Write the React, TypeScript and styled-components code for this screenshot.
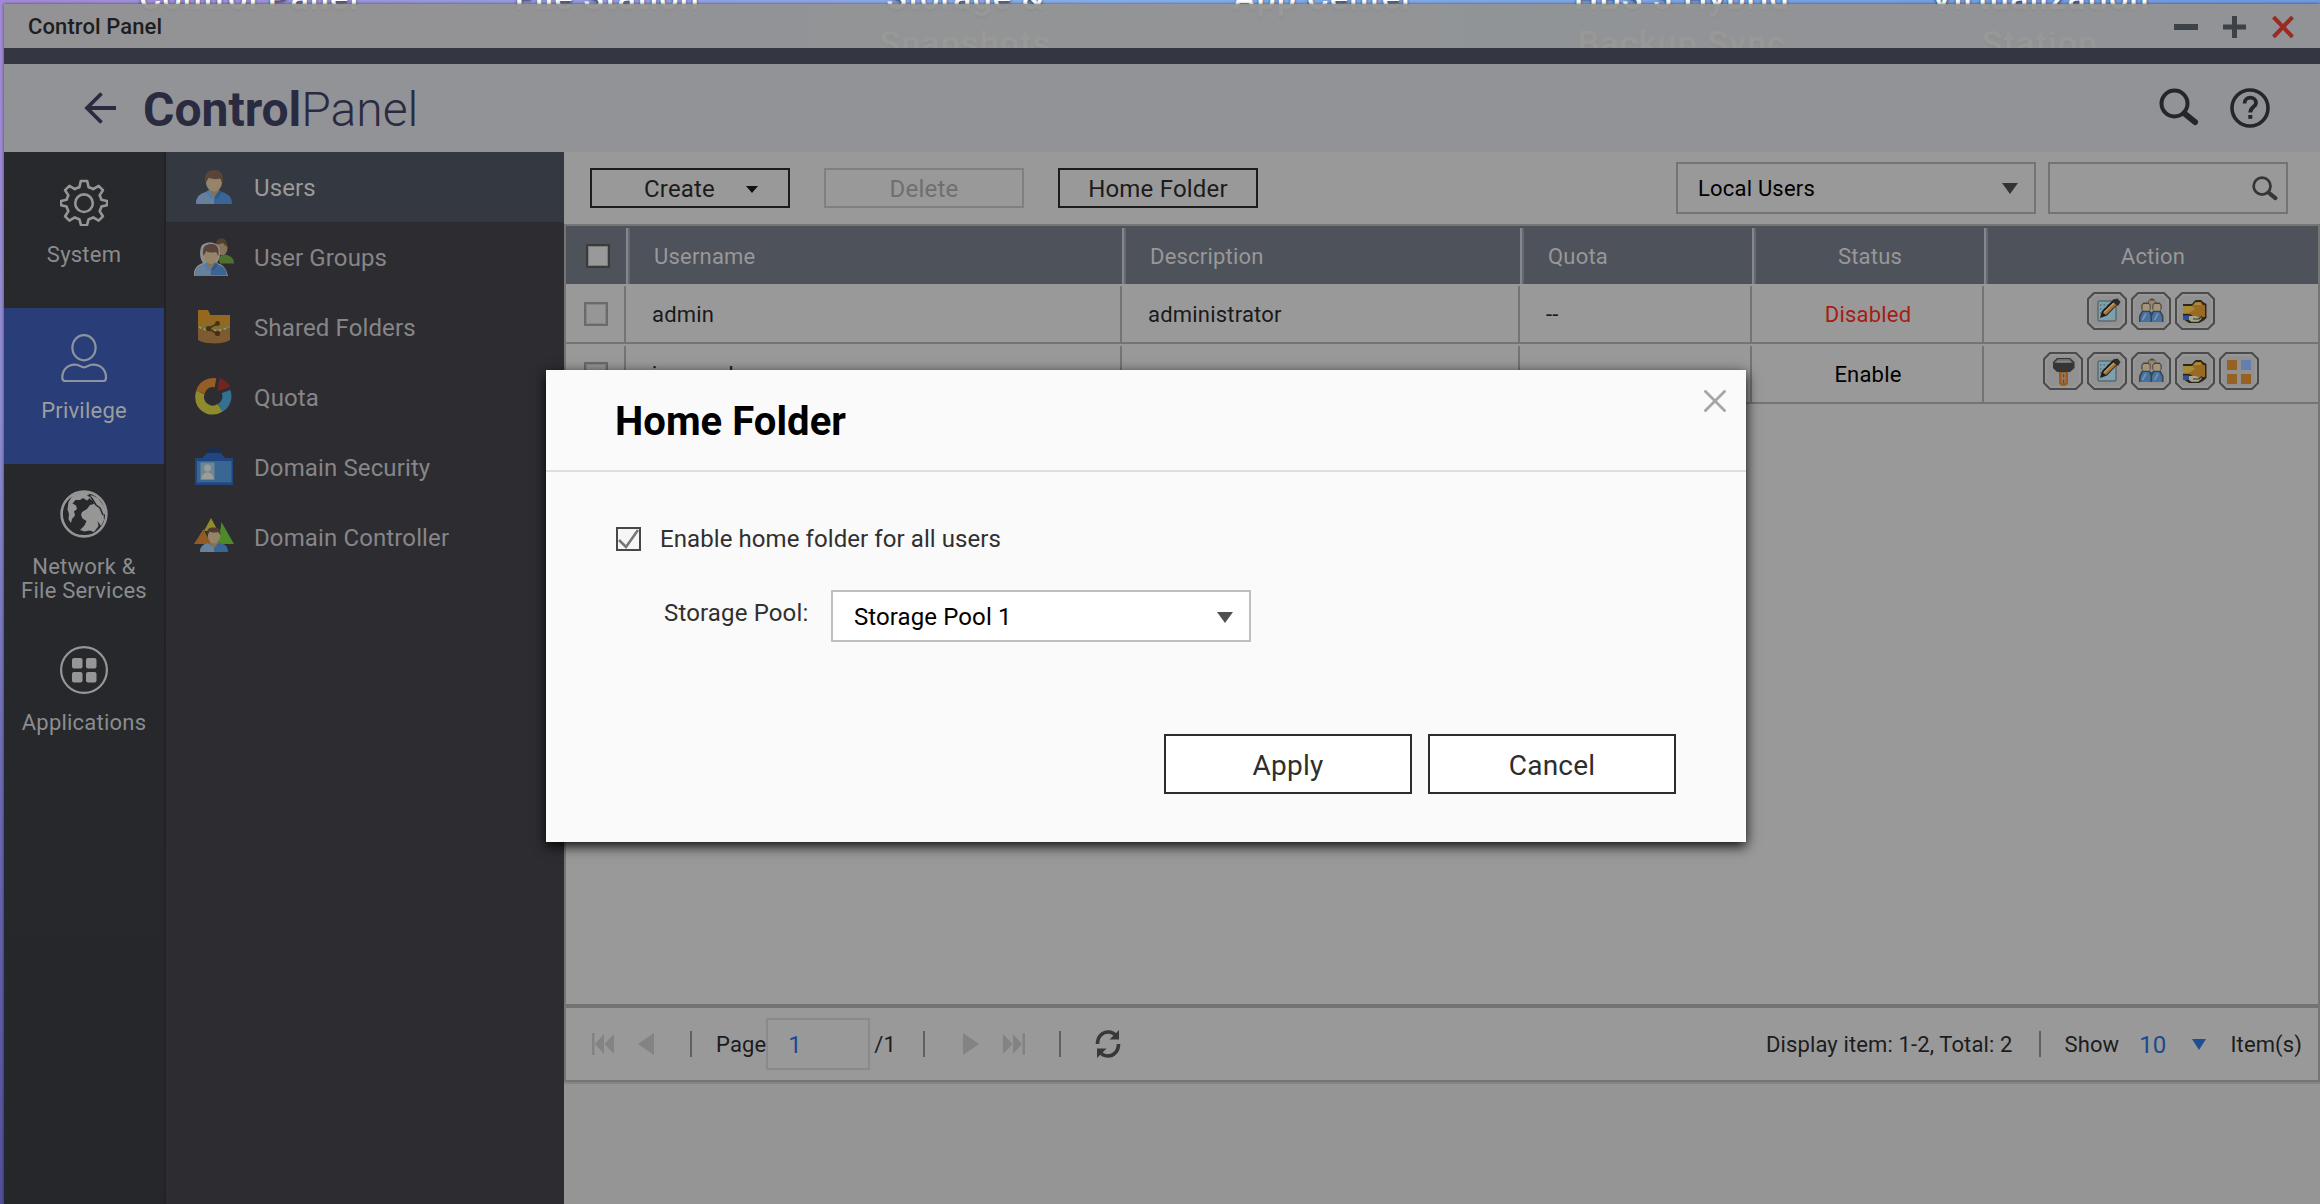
import React from "react";
import styled, { createGlobalStyle, css } from "styled-components";

const GlobalStyle = createGlobalStyle`
  * { box-sizing: border-box; }
  html, body { margin: 0; padding: 0; }
  body { overflow: hidden; font-family: Roboto, "Liberation Sans", sans-serif; }
  button, input { font-family: inherit; }
`;

/* ---------- desktop ---------- */

const Desktop = styled.div`
  position: relative;
  width: 2320px;
  height: 1204px;
  overflow: hidden;
  background:
    linear-gradient(90deg, transparent 4px, #86aeea 1100px, #7099de 2320px) 0 0 / 100% 60px no-repeat,
    linear-gradient(180deg, #a48ad6 0, #8d8ccf 420px, #6c68b4 800px, #54509c 1204px);
`;

const ShortcutRow = styled.div`
  display: flex;
  margin-top: -26px;
  padding-left: 70px;
`;

const Shortcut = styled.div`
  flex: 0 0 358.2px;
  display: flex;
  flex-direction: column;
  align-items: center;
  font-size: 34px;
  font-weight: 500;
  line-height: 46px;
  letter-spacing: 1.15px;
  color: #fff;
  white-space: nowrap;
  text-shadow: 0 2px 3px rgba(0, 0, 0, 0.6);
`;

/* ---------- window ---------- */

const Window = styled.div`
  position: absolute;
  left: 4px;
  top: 4px;
  width: 2316px;
  height: 1200px;
  display: flex;
  flex-direction: column;
  box-shadow: 0 0 3px rgba(0, 0, 0, 0.55);
`;

const TitleBar = styled.div`
  flex: 0 0 44px;
  display: flex;
  align-items: center;
  justify-content: space-between;
  padding: 0 25px 0 24px;
  background: rgba(146, 146, 145, 0.95);
  font-size: 22px;
  font-weight: 500;
  letter-spacing: 0.1px;
  color: #1e1e20;
`;

const WindowControls = styled.div`
  display: flex;
  align-items: center;
  gap: 25px;
  padding-top: 2px;
`;

const AccentBar = styled.div`
  flex: 0 0 16px;
  background: #343642;
`;

const AppHeader = styled.header`
  flex: 0 0 88px;
  display: flex;
  align-items: center;
  padding: 0 50px 0 80px;
  background: #929397;
`;

const BackIcon = styled.svg`
  margin-right: 26px;
`;

const Brand = styled.h1`
  margin: 0;
  flex: 1;
  font-size: 48px;
  line-height: 60px;
  font-weight: 700;
  color: #2a2a40;
  padding-top: 3px;
`;

const BrandLight = styled.span`
  font-weight: 300;
`;

const HeaderTools = styled.div`
  display: flex;
  align-items: flex-start;
  gap: 31px;
`;

const Main = styled.div`
  flex: 1;
  display: flex;
  min-height: 0;
`;

/* ---------- navigation ---------- */

const PrimaryNav = styled.nav`
  flex: 0 0 162px;
  background: linear-gradient(180deg, #28292d 0, #25272b 100%);
  border-right: 2px solid #222327;
  display: flex;
  flex-direction: column;
`;

const PrimaryItem = styled.a<{ $active?: boolean }>`
  flex: 0 0 156px;
  display: flex;
  flex-direction: column;
  align-items: center;
  padding-top: 26px;
  gap: 17px;
  font-size: 22px;
  line-height: 24px;
  letter-spacing: 0.22px;
  text-align: center;
  white-space: pre-line;
  color: ${(p) => (p.$active ? "#9d9d9d" : "#8c8c8e")};
  background: ${(p) => (p.$active ? "#293e78" : "transparent")};
`;

const SecondaryNav = styled.nav`
  flex: 0 0 398px;
  background: #2d2c31;
  display: flex;
  flex-direction: column;
`;

const SecondaryItem = styled.a<{ $active?: boolean }>`
  flex: 0 0 70px;
  display: flex;
  align-items: center;
  padding-left: 28px;
  gap: 20px;
  font-size: 24px;
  letter-spacing: 0.12px;
  color: ${(p) => (p.$active ? "#9a9a9a" : "#868688")};
  background: ${(p) => (p.$active ? "#343840" : "transparent")};
`;

const SecondaryLabel = styled.span`
  padding-top: 2px;
`;

/* ---------- content ---------- */

const Content = styled.main`
  flex: 1;
  display: flex;
  flex-direction: column;
  background: #959595;
`;

const Toolbar = styled.div`
  flex: 0 0 72px;
  display: flex;
  align-items: center;
  padding: 0 32px 0 26px;
  background: #999;
`;

const ToolButton = styled.button<{ $disabled?: boolean; $menu?: boolean }>`
  width: 200px;
  height: 40px;
  margin-right: 34px;
  padding: 2px 0 0 ${(p) => (p.$menu ? 22 : 0)}px;
  display: flex;
  align-items: center;
  justify-content: center;
  gap: 31px;
  font-size: 24px;
  letter-spacing: 0.2px;
  background: none;
  color: ${(p) => (p.$disabled ? "#6f6f6f" : "#1c1c1c")};
  border: 2px solid ${(p) => (p.$disabled ? "#7f7f7f" : "#1c1c1c")};
`;

const Spacer = styled.div`
  flex: 1;
`;

const SelectBox = styled.div<{ $width: number; $light?: boolean }>`
  width: ${(p) => p.$width}px;
  height: 52px;
  display: flex;
  align-items: center;
  justify-content: space-between;
  padding: 1px 16px 0 20px;
  font-size: 22px;
  letter-spacing: 0.2px;
  color: #000;
  border: 2px solid #747474;
  ${(p) =>
    p.$light &&
    css`
      font-size: 24px;
      letter-spacing: 0.1px;
      padding: 2px 16px 0 21px;
      background: #fff;
      border-color: #bfbfbf;
    `}
`;

const SearchBox = styled.div`
  width: 240px;
  height: 52px;
  margin-left: 12px;
  padding: 12px 8px 0 0;
  display: flex;
  justify-content: flex-end;
  border: 2px solid #747474;
`;

const GridPanel = styled.section`
  flex: 0 0 858px;
  display: flex;
  flex-direction: column;
  background: #999;
  border: 2px solid #747574;
  box-shadow: 0 2px 0 #858585;
`;

const HeadRow = styled.div`
  flex: 0 0 58px;
  display: grid;
  grid-template-columns: 60px 496px 398px 232px 232px 334px;
  padding-top: 2px;
  background: #4e525b;
  color: #989898;
  font-size: 22px;
  letter-spacing: 0.2px;
`;

const HeadCell = styled.div<{ $center?: boolean; $first?: boolean }>`
  display: flex;
  align-items: center;
  justify-content: ${(p) => (p.$center ? "center" : "flex-start")};
  ${(p) =>
    p.$first
      ? css`
          padding-left: 20px;
        `
      : css`
          border-left: 2px solid #85878a;
          box-shadow: inset 2px 0 0 #646870;
          padding-left: ${p.$center ? 2 : 26}px;
        `}
`;

const BodyRow = styled.div`
  flex: 0 0 60px;
  display: grid;
  grid-template-columns: 58px 496px 398px 232px 232px 336px;
  padding-top: 2px;
  border-bottom: 2px solid #747474;
  color: #1a1a1a;
  font-size: 22px;
  letter-spacing: 0.2px;
`;

const BodyCell = styled.div<{ $center?: boolean; $first?: boolean; $color?: string }>`
  display: flex;
  align-items: center;
  justify-content: ${(p) => (p.$center ? "center" : "flex-start")};
  color: ${(p) => p.$color ?? "inherit"};
  padding-left: ${(p) => (p.$first ? 18 : p.$center ? 2 : 26)}px;
  border-left: ${(p) => (p.$first ? "none" : "2px solid #747474")};
`;

const Actions = styled.div`
  display: flex;
  gap: 4px;
  padding: 0 2px 6px 0;
`;

const GridCheckbox = styled.span<{ $dark?: boolean }>`
  width: 24px;
  height: 24px;
  border: 2px solid ${(p) => (p.$dark ? "#3a3a3a" : "#6a6a6a")};
  box-shadow: inset 0 0 0 1px ${(p) => (p.$dark ? "#7c7c7c" : "#858585")};
  background: ${(p) => (p.$dark ? "#999" : "#969696")};
`;

const Pager = styled.div`
  flex: 0 0 76px;
  margin-top: auto;
  display: flex;
  align-items: center;
  padding: 0 16px 0 26px;
  border-top: 4px double #767676;
  border-image: linear-gradient(180deg, #737373 50%, #808080 50%) 4;
  color: #1c1c1c;
  font-size: 22px;
  letter-spacing: 0.12px;
  white-space: nowrap;
`;

const PagerBar = styled.i<{ $before: number; $after: number }>`
  width: 2px;
  height: 26px;
  margin: 0 ${(p) => p.$after}px 0 ${(p) => p.$before}px;
  background: #62605a;
`;

const PageInput = styled.span`
  width: 104px;
  height: 52px;
  padding: 2px 0 0 20px;
  margin-right: 4px;
  display: flex;
  align-items: center;
  border: 2px solid #8a8a8a;
  color: #1b4a8e;
  font-size: 24px;
`;

const ShowCount = styled.span`
  margin: 0 26px 0 20px;
  padding-top: 2px;
  color: #1b4a8e;
  font-size: 24px;
`;

const ItemsLabel = styled.span`
  margin-left: 24px;
`;

const PagerIcon = styled.svg<{ $ml?: number }>`
  flex: none;
  margin-left: ${(p) => p.$ml ?? 0}px;
`;

/* ---------- dialog ---------- */

const Dialog = styled.section`
  position: absolute;
  left: 546px;
  top: 370px;
  width: 1200px;
  height: 472px;
  display: flex;
  flex-direction: column;
  background: #fafafa;
  box-shadow: 0 4px 12px rgba(0, 0, 0, 0.95);
`;

const DialogHeader = styled.div`
  flex: 0 0 102px;
  display: flex;
  justify-content: space-between;
  padding: 20px 20px 0 69px;
  border-bottom: 2px solid #dedede;
`;

const DialogTitle = styled.h2`
  margin: 10px 0 0;
  font-size: 40px;
  line-height: 44px;
  font-weight: 700;
  letter-spacing: 0.05px;
  color: #000;
`;

const DialogBody = styled.div`
  flex: 1;
  display: flex;
  flex-direction: column;
  padding: 55px 70px 48px;
  color: #303030;
  font-size: 24px;
  letter-spacing: 0.08px;
`;

const CheckLine = styled.label`
  display: flex;
  align-items: center;
  gap: 19px;
  height: 24px;
`;

const FieldLine = styled.div`
  display: flex;
  margin-top: 39px;
  padding-left: 48px;
`;

const FieldLabel = styled.span`
  width: 167px;
  padding-top: 9px;
  letter-spacing: 0.15px;
`;

const DialogActions = styled.div`
  display: flex;
  justify-content: flex-end;
  gap: 16px;
  margin-top: auto;
`;

const DialogButton = styled.button`
  width: 248px;
  height: 60px;
  padding: 3px 0 0;
  font-size: 28px;
  letter-spacing: 0.2px;
  color: #2e2e2e;
  background: #fff;
  border: 2px solid #2c2c2e;
`;

/* ---------- icons ---------- */

const Caret = ({ w, h, color }: { w: number; h: number; color: string }) => (
  <svg width={w} height={h} viewBox="0 0 16 11" preserveAspectRatio="none">
    <path d="M0 0H16L8 11Z" fill={color} />
  </svg>
);

const Magnifier = ({ size, color, sw }: { size: number; color: string; sw: number }) => (
  <svg width={size} height={size} viewBox="0 0 40 40" fill="none" stroke={color} strokeLinecap="round">
    <circle cx="15.500" cy="15.500" r="13" strokeWidth={sw} />
    <path d="M25.500 25.500L36 34" strokeWidth={sw + 2} />
  </svg>
);

const GearIcon = () => (
  <svg width="48" height="48" viewBox="0 0 48 48" fill="none" stroke="#969696" strokeWidth="2.6" strokeLinejoin="round">
    <path d="M20.8 3H27.2L28.6 9.2C30.4 9.7 31.8 10.3 33.2 11.1L38.6 7.8L42.9 12.2L39.6 17.4C40.4 18.8 41 20.3 41.4 21.8L47 23V27.2L41.4 28.6C41 30.2 40.4 31.7 39.6 33.1L42.9 38.3L38.6 42.6L33.2 39.4C31.8 40.2 30.4 40.8 28.6 41.3L27 47.2H21L19.4 41.3C17.6 40.8 16.2 40.2 14.8 39.4L9.4 42.6L5.1 38.3L8.4 33.1C7.6 31.7 7 30.2 6.6 28.6L1 27.2V23L6.6 21.8C7 20.3 7.6 18.8 8.4 17.4L5.1 12.2L9.4 7.8L14.8 11.1C16.2 10.3 17.6 9.7 19.4 9.2Z" />
    <circle cx="24" cy="25.2" r="8.8" />
  </svg>
);

const PersonIcon = () => (
  <svg width="48" height="48" viewBox="0 0 48 48" fill="none" stroke="#8e949f" strokeWidth="2.200">
    <ellipse cx="24" cy="13.7" rx="11.6" ry="12.6" />
    <path d="M15 30.6C20 30.6 20.500 33.3 24 33.3S28 30.6 33 30.6C41 30.6 46 36 46 43.500C46 46 45.500 47 43.500 47H5C3 47 2.300 46 2.300 43.500C2.300 36 7.500 30.6 15 30.6Z" />
  </svg>
);

const GlobeIcon = () => (
  <svg width="48" height="48" viewBox="0 0 48 48">
    <circle cx="24" cy="24" r="22.400" fill="none" stroke="#969696" strokeWidth="2.600" />
    <path
      d="M13 5L22 2.500L31 3.500L27 5.500L30.500 7.500L27 10.500L23 8L20 10L15.500 10L12.500 13.500L16 15.500L17 19L14 21.500L15 25.500L12 29L11 33L8.500 29.500L9 24L7.500 19.500L8.500 12Z"
      fill="#969696"
    />
    <path
      d="M22 22L27 19L30 15L34 14L33 11L30 9L31 5L38 8L44.500 17L46 25L43.500 24L44 30L41 36L37.500 31L38.500 36L34 42L29.500 40.500L24.500 41.500L20 40L24.500 35.500L26.500 31L22.500 28.500L21 25Z"
      fill="#969696"
    />
    <path d="M31 7L36 15L40 18L43 25" fill="none" stroke="#27282c" strokeWidth="1.500" />
  </svg>
);

const AppsIcon = () => (
  <svg width="48" height="48" viewBox="0 0 48 48">
    <circle cx="24" cy="24" r="22.900" fill="none" stroke="#969696" strokeWidth="2.200" />
    <g fill="#969696">
      <rect x="12" y="12" width="10.500" height="10.500" rx="2" />
      <rect x="26" y="12" width="10.500" height="10.500" rx="2" />
      <rect x="12" y="26" width="10.500" height="10.500" rx="2" />
      <rect x="26" y="26" width="10.500" height="10.500" rx="2" />
    </g>
  </svg>
);

const Bust = () => (
  <>
    <path d="M2 37C2 30 5 27 13.500 24.500L20 30L26.500 24.500C35 27 38 30 38 37Z" fill="#3a6595" />
    <path d="M2 37C2 30 5 27 13.500 24.500L20 30L20 37Z" fill="#67809b" />
    <path d="M15 20H25V26L20 31L15 26Z" fill="#83725a" />
    <path d="M12 25L14.500 23L19.500 30L16.500 32Z" fill="#4f7db0" />
    <path d="M28 25L25.500 23L20.500 30L23.500 32Z" fill="#2d5a8a" />
    <ellipse cx="20" cy="15.500" rx="8" ry="9" fill="#96846a" />
    <path d="M11.500 16C9.500 6 14 3 20.500 3S30 7 28.500 16L26 11.500C23 12.500 17.500 12.500 15 10.500Z" fill="#584438" />
  </>
);

const menuIcons: Record<string, React.ReactNode> = {
  users: <Bust />,
  groups: (
    <>
      <ellipse cx="28" cy="11" rx="5.500" ry="7.500" fill="#85735b" />
      <path d="M22 8C22 3 24 1 28 1.500S33.500 5 32.500 10L29 6Z" fill="#52402f" />
      <path d="M24 20L31 17.500C37 19 40 21 40 26.500H26Z" fill="#50702d" />
      <path d="M0 39V35C1 30 5 27 9 26C5 20 6 14 7 10C9 4 23 4 25 10C27 16 26 21 23 26C29 28 32 30 34 39Z" fill="#8e8e8e" />
      <g transform="translate(-0.800 4.200) scale(0.880 0.930)">
        <Bust />
      </g>
    </>
  ),
  folder: (
    <>
      <path d="M4 3H14L16.500 8H36V24H4Z" fill="#94681f" />
      <path d="M4 19C10 24 30 24 36 19V33C30 37.500 10 37.500 4 33Z" fill="#7c5a32" />
      <path d="M4 19C10 14 30 14 36 19C30 24 10 24 4 19Z" fill="#80702e" />
      <path d="M5 20C12 24.500 28 24.500 35 20" fill="none" stroke="#9c9674" strokeWidth="1.500" strokeDasharray="3 2" />
      <path d="M23 17L14 21.500L23 26.500" fill="none" stroke="#4a3216" strokeWidth="1.800" />
      <g fill="#4a2d14">
        <circle cx="14.500" cy="21.500" r="2.600" />
        <circle cx="23.500" cy="16.500" r="2.400" />
        <circle cx="23.500" cy="26.500" r="2.600" />
      </g>
    </>
  ),
  quota: (
    <>
      <g fill="none" strokeWidth="9">
        <path d="M6.300 15.500A13.200 13.200 0 0 1 21.500 5.700" stroke="#945e24" />
        <path d="M6.300 15.500A13.200 13.200 0 0 0 26.200 30.800" stroke="#8f8a2c" />
        <path d="M32.100 14.500A13.200 13.200 0 0 1 26.200 30.800" stroke="#34708f" />
      </g>
      <path d="M25.500 1C30 2 34 5.500 36 10L23.500 14Z" fill="#742420" />
    </>
  ),
  security: (
    <>
      <path d="M12 0H18L20 5L23 0H28L23.500 8H17Z" fill="#182f55" />
      <path d="M1 11H8L13 6H27L31 11H39V38H1Z" fill="#1f4681" />
      <rect x="3" y="14" width="34.500" height="21.500" fill="#3a6694" />
      <rect x="6.500" y="15.500" width="14" height="17.500" fill="#6e8695" />
      <circle cx="13.500" cy="21" r="3.500" fill="#9b9b98" />
      <path d="M7.500 32C7.500 27 11 25.500 13.500 25.500S19.500 27 19.500 32Z" fill="#9b9b98" />
    </>
  ),
  controller: (
    <>
      <path d="M17 1L24 14H10Z" fill="#938c2c" />
      <path d="M9.500 12L17 27H0Z" fill="#925a24" />
      <path d="M27.500 5L40 27H24Z" fill="#4e8a2c" />
      <path d="M6 35C6 29 10 27 14 26L20 30L26 26C31 27 34 29 34 35Z" fill="#3a6595" />
      <path d="M6 35C6 29 10 27 14 26L20 30V35Z" fill="#6a8299" />
      <path d="M16 22H24V27L20 31L16 27Z" fill="#83725a" />
      <ellipse cx="20" cy="19" rx="6.200" ry="7.500" fill="#96846a" />
      <path d="M13.500 18C12 12 15 10.500 19.500 10.500S27 12 26.500 18L24 15C21 16 17 15.500 15.500 14.500Z" fill="#4e3d33" />
    </>
  ),
};

const MenuIcon = ({ name }: { name: string }) => (
  <svg width="40" height="40" viewBox="0 0 40 40">
    {menuIcons[name]}
  </svg>
);

const actionGlyphs: Record<string, React.ReactNode> = {
  password: (
    <>
      <path d="M16 20H25V32L22 34H19L16 32Z" fill="#9c5c1c" />
      <path d="M18.500 21H22.500V31H18.500Z" fill="#94836a" />
      <path d="M19.800 22H21.300V25.500H19.800ZM19.800 27.500H21.300V31H19.800Z" fill="#7c4612" />
      <path d="M14 6H27L31.500 10V16L27 20H14L10 16V10Z" fill="#353537" />
      <path d="M15 7H26.500L30 11H11Z" fill="#6c6c6c" />
      <path d="M14 9.500H27" stroke="#8a8a8a" strokeWidth="1.400" />
    </>
  ),
  edit: (
    <>
      <rect x="11" y="9" width="18" height="20" rx="1.500" fill="#7da0ae" stroke="#5d6a70" strokeWidth="1.500" />
      <path d="M13 13H22M13 17H19M13 21H16" stroke="#596a72" strokeWidth="1.300" strokeDasharray="1.500 2" />
      <path d="M13 26L15 19L26.500 7.500L31.500 11.500L20 23.500Z" fill="#221d18" />
      <path d="M16 21L26.500 10.500L29.500 12.800L19 23Z" fill="#a87030" />
      <path d="M17 20.500L27 11" stroke="#b99b6c" strokeWidth="1.600" />
      <path d="M26 7.500L30.500 6.500L33.500 10L31 14L27.500 11Z" fill="#2e2c2a" />
    </>
  ),
  group: (
    <>
      <path d="M16.500 10.500L18 8L20 6.500H22L24 8L25 10.500Z" fill="#514a40" />
      <rect x="18" y="8.500" width="6" height="4.500" fill="#96876c" />
      <path d="M8 30V24L11 18.500H18.500L20.500 20.500L22.500 18.500H29.500L32.500 24V30Z" fill="#384450" />
      <path d="M9.500 30V25L12 20H18L19.500 24V30Z" fill="#47719f" />
      <path d="M21 30V24L23 20H28.500L31 25V30Z" fill="#47719f" />
      <path d="M11.500 28L15 21.500M23.500 28L27 21.500" stroke="#6f92b5" strokeWidth="1.800" />
      <path d="M12.500 10.500H17.500L19.700 13V17L17.500 19.500H12.500L10.300 17V13Z" fill="#4b443a" />
      <path d="M23.500 10.500H28.500L30.700 13V17L28.500 19.500H23.500L21.300 17V13Z" fill="#4b443a" />
      <rect x="11.500" y="12" width="7.200" height="6.800" rx="1.500" fill="#a3957a" />
      <rect x="22.300" y="12" width="7.200" height="6.800" rx="1.500" fill="#a3957a" />
    </>
  ),
  share: (
    <>
      <path d="M8 12H17L19.500 9L21 8H26L28 10L31.500 12V26L28 29L24 31H14L8 27Z" fill="#2c271e" />
      <path d="M8 14H17L20.500 10H26L27.500 12.500L30 13.500V25H19L15 22H8Z" fill="#9a6a24" />
      <path d="M8 14H17L20 17L14 21H8Z" fill="#a68a34" />
      <path d="M18.500 12.500L21 10.500H25.500L26.500 13H20Z" fill="#b08a35" />
      <rect x="8" y="23.500" width="7" height="4.500" fill="#2f5092" />
      <path d="M14 24H21L24 25.500L27.500 23.500L26 27.500L23 29.800H16.500L14 28Z" fill="#a7a58a" />
      <path d="M18 27H24L27 24" fill="none" stroke="#35322a" strokeWidth="1.200" />
    </>
  ),
  apps: (
    <>
      <rect x="8" y="8" width="10" height="10" fill="#966224" />
      <rect x="22" y="8" width="10" height="10" fill="#6580b0" />
      <rect x="8" y="22" width="10" height="10" fill="#966224" />
      <rect x="22" y="22" width="10" height="10" fill="#966224" />
    </>
  ),
};

const ActionIcon = ({ name }: { name: string }) => (
  <svg width="40" height="38" viewBox="0 0 40 38">
    <path d="M7 1H33L39 7V31L33 37H7L1 31V7Z" fill="#919191" stroke="#4c4c4c" strokeWidth="2" />
    <path d="M8 3H32L37 8V30L32 35H8L3 30V8Z" fill="none" stroke="#9c9c9c" strokeWidth="1" />
    {actionGlyphs[name]}
  </svg>
);

/* ---------- data ---------- */

const shortcuts = [
  ["Control Panel"],
  ["File Station"],
  ["Storage &", "Snapshots"],
  ["App Center"],
  ["HBS 3 Hybrid", "Backup Sync"],
  ["Virtualization", "Station"],
];

const primaryItems = [
  { label: "System", icon: <GearIcon /> },
  { label: "Privilege", icon: <PersonIcon />, active: true },
  { label: "Network &\nFile Services", icon: <GlobeIcon /> },
  { label: "Applications", icon: <AppsIcon /> },
];

const secondaryItems = [
  { label: "Users", icon: "users", active: true },
  { label: "User Groups", icon: "groups" },
  { label: "Shared Folders", icon: "folder" },
  { label: "Quota", icon: "quota" },
  { label: "Domain Security", icon: "security" },
  { label: "Domain Controller", icon: "controller" },
];

const users = [
  {
    name: "admin",
    description: "administrator",
    quota: "--",
    status: "Disabled",
    color: "#a51d15",
    actions: ["edit", "group", "share"],
  },
  {
    name: "jaysonek",
    description: "",
    quota: "",
    status: "Enable",
    color: "#000",
    actions: ["password", "edit", "group", "share", "apps"],
  },
];

export default function App() {
  return (
    <Desktop>
      <GlobalStyle />
      <ShortcutRow>
        {shortcuts.map((lines) => (
          <Shortcut key={lines[0]}>
            {lines.map((line) => (
              <span key={line}>{line}</span>
            ))}
          </Shortcut>
        ))}
      </ShortcutRow>

      <Window>
        <TitleBar>
          <span>Control Panel</span>
          <WindowControls>
            <svg width="24" height="22" viewBox="0 0 24 22">
              <path d="M0 11H24" stroke="#3d4249" strokeWidth="6" />
            </svg>
            <svg width="23" height="22" viewBox="0 0 23 22">
              <path d="M0 11H23M11.500 0V22" stroke="#3d4249" strokeWidth="5" />
            </svg>
            <svg width="24" height="22" viewBox="0 0 24 22">
              <path d="M2.500 1L21.500 21M21.500 1L2.500 21" stroke="#9a2a22" strokeWidth="4" />
            </svg>
          </WindowControls>
        </TitleBar>
        <AccentBar />
        <AppHeader>
          <BackIcon width="33" height="32" viewBox="0 0 33 32" fill="none" stroke="#2a2a40" strokeWidth="3.800">
            <path d="M17.500 1.500L3 16L17.500 30.500M3 16H32" />
          </BackIcon>
          <Brand>
            Control<BrandLight>Panel</BrandLight>
          </Brand>
          <HeaderTools>
            <Magnifier size={40} color="#24262b" sw={4} />
            <svg width="40" height="40" viewBox="0 0 40 40" fill="none" stroke="#24262b">
              <circle cx="20" cy="20" r="18" strokeWidth="3.600" />
              <path d="M14.500 15.500C14.500 7.500 26 8 26 15C26 19 20.300 18.800 20.300 24.500" strokeWidth="3.800" />
              <path d="M18.300 27H22.300V30.800H18.300Z" fill="#24262b" stroke="none" />
            </svg>
          </HeaderTools>
        </AppHeader>

        <Main>
          <PrimaryNav>
            {primaryItems.map((item) => (
              <PrimaryItem key={item.label} $active={item.active}>
                {item.icon}
                <span>{item.label}</span>
              </PrimaryItem>
            ))}
          </PrimaryNav>
          <SecondaryNav>
            {secondaryItems.map((item) => (
              <SecondaryItem key={item.label} $active={item.active}>
                <MenuIcon name={item.icon} />
                <SecondaryLabel>{item.label}</SecondaryLabel>
              </SecondaryItem>
            ))}
          </SecondaryNav>

          <Content>
            <Toolbar>
              <ToolButton $menu>
                <span>Create</span>
                <Caret w={12} h={7} color="#111" />
              </ToolButton>
              <ToolButton $disabled>Delete</ToolButton>
              <ToolButton>Home Folder</ToolButton>
              <Spacer />
              <SelectBox $width={360}>
                <span>Local Users</span>
                <Caret w={16} h={11} color="#333" />
              </SelectBox>
              <SearchBox>
                <Magnifier size={26} color="#363636" sw={4.200} />
              </SearchBox>
            </Toolbar>

            <GridPanel>
              <HeadRow>
                <HeadCell $first>
                  <GridCheckbox $dark />
                </HeadCell>
                <HeadCell>Username</HeadCell>
                <HeadCell>Description</HeadCell>
                <HeadCell>Quota</HeadCell>
                <HeadCell $center>Status</HeadCell>
                <HeadCell $center>Action</HeadCell>
              </HeadRow>
              {users.map((user) => (
                <BodyRow key={user.name}>
                  <BodyCell $first>
                    <GridCheckbox />
                  </BodyCell>
                  <BodyCell>{user.name}</BodyCell>
                  <BodyCell>{user.description}</BodyCell>
                  <BodyCell>{user.quota}</BodyCell>
                  <BodyCell $center $color={user.color}>
                    {user.status}
                  </BodyCell>
                  <BodyCell $center>
                    <Actions>
                      {user.actions.map((action) => (
                        <ActionIcon key={action} name={action} />
                      ))}
                    </Actions>
                  </BodyCell>
                </BodyRow>
              ))}

              <Pager>
                <PagerIcon width="22" height="22" viewBox="0 0 22 22">
                  <path d="M0 0H2.500V22H0ZM12 1V21L3 11ZM22 1V21L12.500 11Z" fill="#838383" />
                </PagerIcon>
                <PagerIcon $ml={24} width="16" height="22" viewBox="0 0 16 22">
                  <path d="M16 0V22L0 11Z" fill="#838383" />
                </PagerIcon>
                <PagerBar $before={36} $after={24} />
                <span>Page</span>
                <PageInput>1</PageInput>
                <span>/1</span>
                <PagerBar $before={27} $after={38} />
                <PagerIcon width="16" height="22" viewBox="0 0 16 22">
                  <path d="M0 0V22L16 11Z" fill="#838383" />
                </PagerIcon>
                <PagerIcon $ml={24} width="22" height="22" viewBox="0 0 22 22">
                  <path d="M22 0H19.500V22H22ZM10 1V21L19 11ZM0 1V21L9.500 11Z" fill="#838383" />
                </PagerIcon>
                <PagerBar $before={34} $after={34} />
                <PagerIcon width="26" height="30" viewBox="0 0 26 30">
                  <g fill="none" stroke="#383838" strokeWidth="3.600">
                    <path d="M2.500 15C2.500 7 8 3 13 3C17 3 20 5 21.500 8" />
                    <path d="M23.500 15C23.500 23 18 27 13 27C9 27 6 25 4.500 22" />
                  </g>
                  <path d="M24 1V10.500H14.500ZM2 29V19.500H11.500Z" fill="#383838" />
                </PagerIcon>
                <Spacer />
                <span>Display item: 1-2, Total: 2</span>
                <PagerBar $before={26} $after={24} />
                <span>Show</span>
                <ShowCount>10</ShowCount>
                <Caret w={14} h={11} color="#1f4e92" />
                <ItemsLabel>Item(s)</ItemsLabel>
              </Pager>
            </GridPanel>
          </Content>
        </Main>
      </Window>

      <Dialog role="dialog">
        <DialogHeader>
          <DialogTitle>Home Folder</DialogTitle>
          <svg width="22" height="22" viewBox="0 0 22 22" stroke="#a6a6a6" strokeWidth="2.800">
            <path d="M0.500 0.500L21.500 21.500M21.500 0.500L0.500 21.500" />
          </svg>
        </DialogHeader>
        <DialogBody>
          <CheckLine>
            <svg width="25" height="24" viewBox="0 0 25 24" fill="none">
              <rect x="1" y="1" width="23" height="22" stroke="#474747" strokeWidth="2" fill="#f6f6f6" />
              <path d="M3 13L10 20L22 3" stroke="#777" strokeWidth="2.600" />
            </svg>
            <span>Enable home folder for all users</span>
          </CheckLine>
          <FieldLine>
            <FieldLabel>Storage Pool:</FieldLabel>
            <SelectBox $width={420} $light>
              <span>Storage Pool 1</span>
              <Caret w={16} h={11} color="#505050" />
            </SelectBox>
          </FieldLine>
          <DialogActions>
            <DialogButton>Apply</DialogButton>
            <DialogButton>Cancel</DialogButton>
          </DialogActions>
        </DialogBody>
      </Dialog>
    </Desktop>
  );
}
